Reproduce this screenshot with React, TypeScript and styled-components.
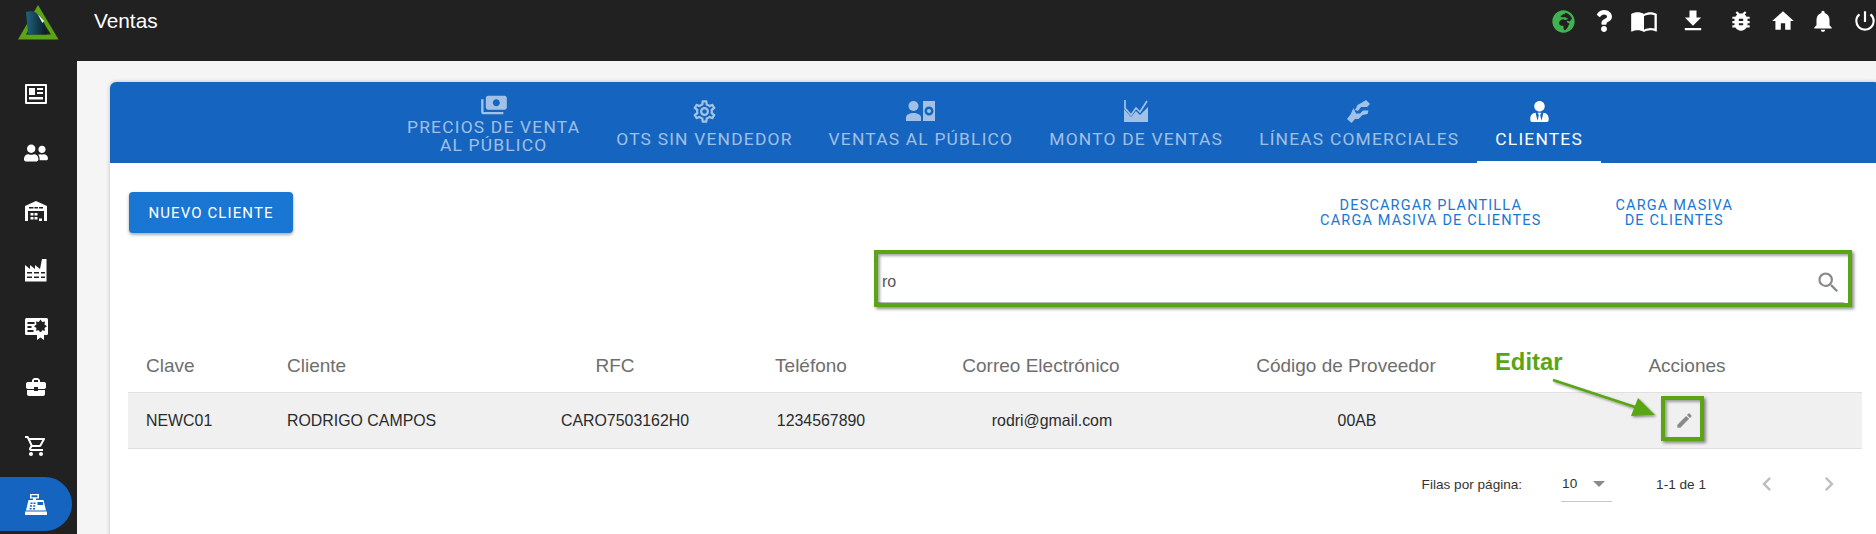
import React from "react";
import styled, { createGlobalStyle } from "styled-components";
import { FaGlobeAfrica, FaQuestion, FaUserFriends, FaUserTie } from "react-icons/fa";
import {
  MdBugReport, MdBusinessCenter, MdChevronLeft, MdChevronRight, MdEdit, MdFileDownload, MdHome, MdImportContacts,
  MdNotifications, MdOutlineSettings, MdOutlineShoppingCart, MdPayments, MdPowerSettingsNew, MdSearch,
} from "react-icons/md";

const GREEN = "#5aa514";

const Global = createGlobalStyle`
  html, body { margin: 0; padding: 0; height: 100%; overflow: hidden; background: #f5f5f5; }
  body { font-family: "Liberation Sans", Arial, sans-serif; }
  #root { width: 1876px; height: 534px; overflow: hidden; }
`;

const Shell = styled.div`
  display: grid;
  grid-template-columns: 77px 1fr;
  grid-template-rows: 61px 1fr;
  width: 1876px;
  height: 534px;
  overflow: hidden;
`;

const TopBar = styled.header`
  grid-column: 1 / 3;
  display: flex;
  background: #212121;
  height: 61px;
`;

const LogoCell = styled.div`
  width: 94px;
  flex: none;
  svg { display: block; width: 77px; height: 61px; }
`;

const Title = styled.h1`
  margin: 9px 0 0;
  font-size: 20.8px;
  line-height: 24px;
  font-weight: 400;
  color: #fff;
`;

const TopIcons = styled.div`
  margin-left: auto;
  display: flex;
  align-items: flex-start;
  padding-top: 9px;
`;

const TopIcon = styled.span<{ $gap?: number; $color?: string; $size?: number }>`
  width: 22px;
  height: 24px;
  margin-left: ${(p) => p.$gap ?? 0}px;
  display: flex;
  align-items: center;
  justify-content: center;
  color: ${(p) => p.$color ?? "#fff"};
  font-size: ${(p) => p.$size ?? 24}px;
  svg { flex: none; }
`;

const Side = styled.nav`
  background: #212121;
  display: flex;
  flex-direction: column;
  align-items: flex-start;
  padding-top: 6px;
`;

const SideItem = styled.a<{ $active?: boolean }>`
  width: 72px;
  height: 54px;
  margin-bottom: 4.6px;
  display: flex;
  align-items: center;
  box-sizing: border-box;
  padding-left: 24px;
  color: #fff;
  font-size: 24px;
  border-radius: 0 27px 27px 0;
  background: ${(p) => (p.$active ? "#1565c0" : "transparent")};
`;

const Main = styled.main`
  background: #f5f5f5;
  padding: 21px 0 0 33px;
  overflow: hidden;
  min-width: 0;
`;

const Card = styled.section`
  width: 1770px;
  height: 480px;
  background: #fff;
  border-radius: 6px 6px 0 0;
  box-shadow: 0 0 4px rgba(0, 0, 0, 0.22);
  overflow: hidden;
`;

const Tabs = styled.div`
  display: flex;
  justify-content: center;
  background: #1565c0;
  height: 81px;
`;

const Tab = styled.div<{ $active?: boolean; $wrap?: boolean }>`
  position: relative;
  box-sizing: border-box;
  padding: 2px 18px 0;
  display: flex;
  flex-direction: column;
  align-items: center;
  justify-content: center;
  gap: ${(p) => (p.$wrap ? 1 : 7)}px;
  font-family: Roboto, sans-serif;
  font-size: 17.4px;
  line-height: 18px;
  letter-spacing: 1.2px;
  text-align: center;
  text-transform: uppercase;
  font-weight: 400;
  color: ${(p) => (p.$active ? "#fff" : "rgba(255,255,255,.6)")};
  &::after {
    content: "";
    display: ${(p) => (p.$active ? "block" : "none")};
    position: absolute;
    left: 0;
    right: 0;
    bottom: 0;
    height: 2px;
    background: #fff;
  }
`;

const TabIcon = styled.span<{ $size?: number }>`
  height: 24px;
  display: flex;
  align-items: center;
  justify-content: center;
  font-size: ${(p) => p.$size ?? 24}px;
`;

const FlipX = styled.span`
  display: flex;
  transform: scaleX(-1);
`;

const Body = styled.div`
  padding: 29px 18px 0;
  width: 1734px;
`;

const Toolbar = styled.div`
  display: flex;
  align-items: flex-start;
  justify-content: space-between;
  height: 41px;
`;

const PrimaryButton = styled.button`
  width: 164px;
  height: 41px;
  margin-left: 1px;
  padding: 0;
  border: 0;
  border-radius: 4px;
  background: #1976d2;
  color: #fff;
  font-family: Roboto, sans-serif;
  font-size: 15px;
  font-weight: 400;
  letter-spacing: 1.1px;
  text-transform: uppercase;
  box-shadow: 0 2px 3px rgba(0, 0, 0, 0.25), 0 1px 4px rgba(0, 0, 0, 0.12);
`;

const Links = styled.div`
  display: flex;
  gap: 74px;
  margin-right: 129px;
`;

const LinkButton = styled.a`
  display: block;
  padding-top: 6px;
  font-family: Roboto, sans-serif;
  font-size: 14.5px;
  line-height: 15px;
  letter-spacing: 1.15px;
  text-align: center;
  text-transform: uppercase;
  color: #1976d2;
`;

const SearchField = styled.div`
  position: relative;
  box-sizing: border-box;
  width: 966px;
  height: 48px;
  margin: 22px 18px 0 auto;
  padding: 7px 2px 0 4px;
  display: flex;
  align-items: center;
  justify-content: space-between;
  border-bottom: 1px solid #bdbdbd;
  color: #555;
  font-size: 16px;
  svg { color: #8a8a8a; font-size: 27px; }
`;

const Highlight = styled.div<{ $inset: string }>`
  position: absolute;
  inset: ${(p) => p.$inset};
  border: 4px solid ${GREEN};
  box-shadow: 2px 2px 3px rgba(0, 0, 0, 0.45), inset 2px 2px 3px rgba(0, 0, 0, 0.35);
  pointer-events: none;
`;

const TableWrap = styled.div`
  position: relative;
  margin-top: 37px;
`;

const Row = styled.div<{ $head?: boolean }>`
  display: grid;
  grid-template-columns: 141px 261px 190px 202px 260px 356px 324px;
  height: ${(p) => (p.$head ? 52 : 55)}px;
  align-items: center;
  border-bottom: 1px solid #e0e0e0;
  background: ${(p) => (p.$head ? "transparent" : "#f0f0f0")};
  font-size: ${(p) => (p.$head ? 19 : 15.9)}px;
  color: ${(p) => (p.$head ? "#6e6e6e" : "#2b2b2b")};
`;

const Cell = styled.div<{ $left?: boolean; $shift?: number }>`
  position: relative;
  text-align: ${(p) => (p.$left ? "left" : "center")};
  padding-left: ${(p) => (p.$left ? 18 : 0)}px;
  padding-right: ${(p) => p.$shift ?? 0}px;
  white-space: nowrap;
`;

const Pencil = styled.span`
  display: flex;
  justify-content: center;
  color: #8a8a8a;
  font-size: 19px;
`;

const CalloutLabel = styled.div`
  position: absolute;
  left: 1367px;
  top: 9px;
  font-size: 23.8px;
  line-height: 26px;
  font-weight: 700;
  color: ${GREEN};
`;

const CalloutArrow = styled.svg`
  position: absolute;
  left: 1417px;
  top: 34px;
  width: 120px;
  height: 50px;
  overflow: visible;
`;

const Pagination = styled.div`
  display: flex;
  align-items: center;
  justify-content: flex-end;
  height: 70px;
  padding-right: 21px;
  font-size: 13.6px;
  color: #333;
`;

const PageSelect = styled.div`
  box-sizing: border-box;
  width: 51px;
  height: 36px;
  margin: 0 44px 0 39px;
  padding: 0 0 0 1px;
  display: flex;
  align-items: center;
  gap: 16px;
  border-bottom: 1px solid #c8c8c8;
`;

const Caret = styled.span`
  width: 0;
  height: 0;
  border-left: 6px solid transparent;
  border-right: 6px solid transparent;
  border-top: 6px solid #8a8a8a;
`;

const PageButton = styled.span<{ $gap: number }>`
  display: flex;
  margin-left: ${(p) => p.$gap}px;
  color: #bdbdbd;
  font-size: 28px;
  width: 24px;
  justify-content: center;
  svg { flex: none; }
`;

const Logo = () => (
  <svg viewBox="0 0 77 61" aria-hidden="true">
    <defs>
      <linearGradient id="logoFill" x1="0" x2="1" y1="0" y2="0">
        <stop offset="0" stopColor="#1f6480" />
        <stop offset="1" stopColor="#0b1a20" />
      </linearGradient>
    </defs>
    <polygon points="38,5 58.5,39.5 18,39.5" fill="#5aa514" />
    <polygon points="38,14 51,34.5 26,34.5" fill="#212121" />
    <polygon points="26,12 31,11 36,12.5 44,23 47,34.5 28,34.5" fill="url(#logoFill)" />
    <polygon points="37.5,14 44,21 42.5,23" fill="#fff" />
  </svg>
);

const NewsIcon = () => (
  <svg width="24" height="24" viewBox="0 0 24 24" fill="currentColor" aria-hidden="true">
    <path fillRule="evenodd" d="M2 2h20a1 1 0 0 1 1 1v18a1 1 0 0 1-1 1H2a1 1 0 0 1-1-1V3a1 1 0 0 1 1-1zm1 2v16h18V4H3zm2 2h6v7H5V6zm8 0h6v2h-6V6zm0 4h6v2h-6v-2zM5 15h14v2.5H5V15z" />
  </svg>
);

const WarehouseIcon = () => (
  <svg width="24" height="24" viewBox="0 0 24 24" fill="currentColor" aria-hidden="true">
    <path fillRule="evenodd" d="M12 2l11 5v15h-3V12H4v10H1V7l11-5zM5 8v1.5h4.5V8H5zm5.5 0v1.5h3.5V8h-3.5zM15 8v1.5h4V8h-4z" />
    <path d="M6.5 14h3v2.5h-3zM10.5 14h3v2.5h-3zM6.5 18h3v2.5h-3zM10.5 18h3v2.5h-3zM15 19.5h3V22h-3z" />
  </svg>
);

const FactoryIcon = () => (
  <svg width="24" height="24" viewBox="0 0 24 24" fill="currentColor" aria-hidden="true">
    <path fillRule="evenodd" d="M1 23.5V7l5 4V7l5 4V7l5 4 2-10h4.5v22.5H1zM3 14v1.5h5V14H3zm7 0v1.5h5V14h-5zm7 0v1.5h4V14h-4zM3 18.5V20h5v-1.5H3zm7 0V20h5v-1.5h-5zm7 0V20h4v-1.5h-4z" />
  </svg>
);

const CertIcon = () => (
  <svg width="24" height="24" viewBox="0 0 24 24" aria-hidden="true">
    <rect x="1" y="2" width="23" height="17" rx="1.5" fill="#fff" />
    <path d="M3.5 6h7v2h-7zM3.5 10h4v2h-4zM3.5 14h6v2h-6z" fill="#212121" />
    <polygon points="16.5,3.5 18.2,6 21,5.5 20.5,8.4 23,10.2 20.5,12 21,14.8 18.2,14.3 16.5,17 14.8,14.3 12,14.8 12.5,12 10,10.2 12.5,8.4 12,5.5 14.8,6" fill="#212121" />
    <polygon points="13,16 20,16 20,24 16.5,21.5 13,24" fill="#fff" />
  </svg>
);

const RegisterIcon = () => (
  <svg width="24" height="24" viewBox="0 0 24 24" aria-hidden="true">
    <path fillRule="evenodd" d="M6 2h9v4.5h-3V8h7.5L22 18.5H2L4.5 8H9V6.5H6V2zm1.5 1.3v1.9h6V3.3h-6z" fill="#fff" />
    <rect x="1" y="19.5" width="22" height="3.5" fill="#fff" />
    <path d="M6.5 10.5h2v1.5h-2zM9.5 10.5h2v1.5h-2zM6 13.3h2v1.5H6zM9.2 13.3h2v1.5h-2zM5.6 16h2v1.5h-2zM9 16h2v1.5H9z" fill="#1565c0" />
    <rect x="13.5" y="10" width="5.5" height="3" fill="#1565c0" />
  </svg>
);

const PersonBillIcon = () => (
  <svg width="29" height="20" viewBox="0 0 29 20" fill="currentColor" aria-hidden="true">
    <circle cx="7.5" cy="5" r="5" />
    <path d="M0 20v-3.5C0 13.5 4 12 7.5 12s7.5 1.5 7.5 4.5V20H0z" />
    <path fillRule="evenodd" d="M17 0h12v20H17V0zm6 5.5a4.5 4.5 0 1 0 0 9 4.5 4.5 0 0 0 0-9z" />
    <circle cx="23" cy="10" r="2" />
  </svg>
);

const AreaIcon = () => (
  <svg width="24" height="22" viewBox="0 0 24 22" aria-hidden="true">
    <path d="M0 22V9l7 8 5-6 4 4 8-8v15H0z" fill="currentColor" />
    <path d="M1 0v8l6 7 5-7 4 4 7-11" fill="none" stroke="currentColor" strokeWidth="1.7" />
  </svg>
);

const HandsIcon = () => (
  <svg width="24" height="24" viewBox="0 0 24 24" fill="currentColor" aria-hidden="true">
    <path d="M19 1l4 4-3 3h-6l-3 4-3-1 2.5-5L15 3.5z" />
    <path d="M6.5 9l2.5 5.5h4l3-3h5.5L20.5 15l-5 1-4 4H8l-3.5 4L0 20l3.5-4.5z" />
  </svg>
);

const sideIcons = [
  <NewsIcon key="a" />, <FaUserFriends key="b" />, <WarehouseIcon key="c" />, <FactoryIcon key="d" />,
  <CertIcon key="e" />, <MdBusinessCenter key="f" />, <MdOutlineShoppingCart key="g" />,
];

export default function App() {
  return (
    <Shell>
      <Global />
      <TopBar>
        <LogoCell><Logo /></LogoCell>
        <Title>Ventas</Title>
        <TopIcons>
          <TopIcon $color="#3fb34f" $size={23}><FaGlobeAfrica /></TopIcon>
          <TopIcon $gap={19} $size={22}><FaQuestion /></TopIcon>
          <TopIcon $gap={18} $size={28}><MdImportContacts /></TopIcon>
          <TopIcon $gap={27} $size={28}><MdFileDownload /></TopIcon>
          <TopIcon $gap={26} $size={26}><MdBugReport /></TopIcon>
          <TopIcon $gap={20} $size={26}><MdHome /></TopIcon>
          <TopIcon $gap={18} $size={26}><MdNotifications /></TopIcon>
          <TopIcon $gap={20} $size={26}><MdPowerSettingsNew /></TopIcon>
        </TopIcons>
      </TopBar>
      <Side>
        {sideIcons.map((icon, i) => <SideItem key={i}>{icon}</SideItem>)}
        <SideItem $active><RegisterIcon /></SideItem>
      </Side>
      <Main>
        <Card>
          <Tabs>
            <Tab $wrap>
              <TabIcon $size={28}><FlipX><MdPayments /></FlipX></TabIcon>
              <span>Precios de venta<br />al público</span>
            </Tab>
            <Tab><TabIcon $size={27}><MdOutlineSettings /></TabIcon><span>OTS sin vendedor</span></Tab>
            <Tab><TabIcon><PersonBillIcon /></TabIcon><span>Ventas al público</span></Tab>
            <Tab><TabIcon><AreaIcon /></TabIcon><span>Monto de ventas</span></Tab>
            <Tab><TabIcon><HandsIcon /></TabIcon><span>Líneas comerciales</span></Tab>
            <Tab $active><TabIcon $size={21}><FaUserTie /></TabIcon><span>Clientes</span></Tab>
          </Tabs>
          <Body>
            <Toolbar>
              <PrimaryButton>Nuevo cliente</PrimaryButton>
              <Links>
                <LinkButton>Descargar plantilla<br />carga masiva de clientes</LinkButton>
                <LinkButton>Carga masiva<br />de clientes</LinkButton>
              </Links>
            </Toolbar>
            <SearchField>
              <span>ro</span>
              <MdSearch />
              <Highlight $inset="-5px -8px -5px -4px" />
            </SearchField>
            <TableWrap>
              <Row $head>
                <Cell $left>Clave</Cell>
                <Cell $left>Cliente</Cell>
                <Cell $shift={20}>RFC</Cell>
                <Cell $shift={20}>Teléfono</Cell>
                <Cell $shift={22}>Correo Electrónico</Cell>
                <Cell $shift={28}>Código de Proveedor</Cell>
                <Cell $shift={26}>Acciones</Cell>
              </Row>
              <Row>
                <Cell $left>NEWC01</Cell>
                <Cell $left>RODRIGO CAMPOS</Cell>
                <Cell>CARO7503162H0</Cell>
                <Cell>1234567890</Cell>
                <Cell>rodri@gmail.com</Cell>
                <Cell $shift={6}>00AB</Cell>
                <Cell $shift={32}><Pencil><MdEdit /></Pencil></Cell>
              </Row>
              <CalloutLabel>Editar</CalloutLabel>
              <CalloutArrow viewBox="0 0 120 50" aria-hidden="true">
                <defs>
                  <filter id="arrowShadow" x="-10%" y="-30%" width="130%" height="170%">
                    <feDropShadow dx="1.5" dy="1.5" stdDeviation="1.2" floodOpacity="0.4" />
                  </filter>
                </defs>
                <g filter="url(#arrowShadow)" fill={GREEN} stroke={GREEN}>
                  <line x1="8" y1="6" x2="96" y2="35" strokeWidth="2.6" />
                  <polygon points="110,41 86,42 93,24" strokeWidth="0" />
                </g>
              </CalloutArrow>
              <Highlight $inset="56px 158px 8px 1533px" />
            </TableWrap>
            <Pagination>
              <span>Filas por página:</span>
              <PageSelect><span>10</span><Caret /></PageSelect>
              <span>1-1 de 1</span>
              <PageButton $gap={49}><MdChevronLeft /></PageButton>
              <PageButton $gap={38}><MdChevronRight /></PageButton>
            </Pagination>
          </Body>
        </Card>
      </Main>
    </Shell>
  );
}
